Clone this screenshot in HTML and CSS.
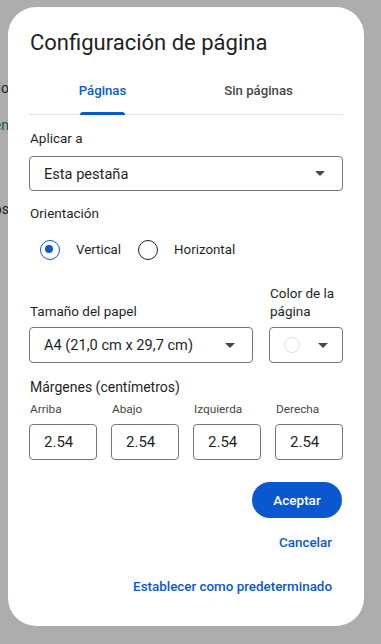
FILE: index.html
```html
<!DOCTYPE html>
<html lang="es">
<head>
    <meta charset="UTF-8">
    <meta name="viewport" content="width=device-width, initial-scale=1.0">
    <title>Configuración de página</title>
    <link rel="stylesheet" href="styles.css">
</head>
<body>
    <div class="doc-behind">
        <div class="doc-line doc-line-1"><span>Documento sin título</span></div>
        <div class="doc-line doc-line-2 doc-green"><span>Agregar pestaña y resumen</span></div>
        <div class="doc-line doc-line-3"><span>Los encabezados aparecerán aquí. Títulos</span></div>
    </div>

    <div class="dialog" role="dialog">
        <h1 class="dialog-title">Configuración de página</h1>

        <nav class="tabs">
            <a href="#" class="tab active"><span>Páginas</span></a>
            <a href="#" class="tab"><span>Sin páginas</span></a>
        </nav>

        <div class="field-label apply-label">Aplicar a</div>
        <div class="select">
            <span class="select-text">Esta pestaña</span>
            <span class="caret"></span>
        </div>

        <div class="field-label orient-label">Orientación</div>
        <div class="radio-row">
            <label class="radio">
                <span class="radio-dot checked"></span>
                <span class="radio-text">Vertical</span>
            </label>
            <label class="radio">
                <span class="radio-dot"></span>
                <span class="radio-text">Horizontal</span>
            </label>
        </div>

        <div class="paper-row">
            <div class="paper-col">
                <div class="field-label">Tamaño del papel</div>
                <div class="select">
                    <span class="select-text">A4 (21,0 cm x 29,7 cm)</span>
                    <span class="caret"></span>
                </div>
            </div>
            <div class="color-col">
                <div class="field-label">Color de la página</div>
                <div class="select color-select">
                    <span class="swatch"></span>
                    <span class="caret"></span>
                </div>
            </div>
        </div>

        <div class="field-label margins-label">Márgenes (centímetros)</div>
        <div class="margins">
            <div class="margin-field">
                <div class="margin-label">Arriba</div>
                <div class="margin-input">2.54</div>
            </div>
            <div class="margin-field">
                <div class="margin-label">Abajo</div>
                <div class="margin-input">2.54</div>
            </div>
            <div class="margin-field">
                <div class="margin-label">Izquierda</div>
                <div class="margin-input">2.54</div>
            </div>
            <div class="margin-field">
                <div class="margin-label">Derecha</div>
                <div class="margin-input">2.54</div>
            </div>
        </div>

        <div class="actions">
            <button class="btn-primary">Aceptar</button>
            <button class="btn-text cancel-btn">Cancelar</button>
            <button class="btn-text default-btn">Establecer como predeterminado</button>
        </div>
    </div>
</body>
</html>
```

FILE: styles.css
```css
:root {
    --blue: #0b57d0;
    --text: #1f1f1f;
    --muted: #444746;
    --outline: #747775;
    --scrim: #adadad;
}

* {
    margin: 0;
    padding: 0;
    box-sizing: border-box;
    font-family: Roboto, 'Noto Sans', sans-serif;
}

body {
    background: var(--scrim);
    color: var(--text);
    width: 381px;
    height: 644px;
    overflow: hidden;
    position: relative;
}

/* document text under the scrim, only its edge peeks out */
.doc-behind {
    width: 9px;
    padding-top: 78px;
}

.doc-line {
    display: flex;
    justify-content: flex-end;
    white-space: nowrap;
    font-size: 14px;
    line-height: 20px;
    color: #222;
}

.doc-line-2 {
    margin-top: 17px;
}

.doc-line-3 {
    margin-top: 64px;
}

.doc-green {
    color: #1e5a2c;
}

.dialog {
    position: absolute;
    top: 7px;
    left: 8px;
    width: 356px;
    height: 619px;
    background: #fff;
    border-radius: 28px;
    padding: 22px 21px 22px;
    display: flex;
    flex-direction: column;
}

.dialog-title {
    font-size: 22px;
    font-weight: 400;
    line-height: 28px;
    color: var(--text);
    padding-left: 1px;
}

.tabs {
    margin-top: 9px;
    display: flex;
    border-bottom: 1px solid #e3e3e3;
}

.tab {
    flex: 1;
    height: 48px;
    display: flex;
    justify-content: center;
    align-items: stretch;
    text-decoration: none;
    color: var(--muted);
    font-size: 13.2px;
    font-weight: 500;
}

.tab:first-child {
    margin-left: -5px;
    margin-right: 5px;
}

.tab:last-child {
    margin-left: -6px;
    margin-right: 6px;
}

.tab span {
    display: flex;
    align-items: center;
    position: relative;
}

.tab.active {
    color: var(--blue);
}

.tab.active span::after {
    content: '';
    position: absolute;
    left: 1px;
    right: 1px;
    bottom: -1px;
    height: 3px;
    background: var(--blue);
    border-radius: 3px 3px 0 0;
}

.field-label {
    font-size: 13.5px;
    line-height: 20px;
    color: var(--text);
    padding-left: 1px;
}

.apply-label {
    margin-top: 13px;
}

.select {
    margin-top: 8px;
    height: 36px;
    border: 1px solid var(--outline);
    border-radius: 4px;
    display: flex;
    align-items: center;
    padding: 0 17px 0 14px;
}

.select-text {
    flex: 1;
    font-size: 14.6px;
    color: var(--text);
}

.caret {
    width: 0;
    height: 0;
    border-left: 5px solid transparent;
    border-right: 5px solid transparent;
    border-top: 5px solid var(--muted);
}

.orient-label {
    margin-top: 12px;
}

.radio-row {
    margin-top: 8px;
    height: 36px;
    display: flex;
    align-items: center;
}

.radio {
    display: flex;
    align-items: center;
    font-size: 13.3px;
    color: var(--text);
}

.radio + .radio {
    margin-left: 6px;
}

.radio-dot {
    width: 40px;
    height: 36px;
    position: relative;
    margin-right: 7px;
}

.radio-dot::before {
    content: '';
    position: absolute;
    left: 11px;
    top: 9px;
    width: 18px;
    height: 18px;
    border: 1.6px solid var(--text);
    border-radius: 50%;
}

.radio-dot.checked::before {
    border-color: var(--blue);
}

.radio-dot.checked::after {
    content: '';
    position: absolute;
    left: 16px;
    top: 14px;
    width: 8px;
    height: 8px;
    background: var(--blue);
    border-radius: 50%;
}

.paper-row {
    margin-top: 17px;
    display: flex;
    gap: 16px;
    align-items: flex-end;
}

.paper-col {
    flex: 1;
}

.paper-col .field-label,
.color-col .field-label {
    line-height: 18px;
}

.color-col {
    width: 74px;
}

.paper-col .select,
.color-select {
    margin-top: 7px;
}

.color-select {
    padding: 0 14px 0 14px;
    justify-content: space-between;
}

.swatch {
    width: 16px;
    height: 16px;
    border: 1px solid #e0e0e0;
    border-radius: 50%;
}

.margins-label {
    margin-top: 14px;
    font-size: 14px;
}

.margins {
    margin-top: 3px;
    display: flex;
    gap: 14px;
}

.margin-field {
    flex: 1;
}

.margin-label {
    font-size: 11.8px;
    line-height: 18px;
    color: var(--muted);
    padding-left: 1px;
}

.margin-input {
    margin-top: 6px;
    height: 36px;
    border: 1px solid var(--outline);
    border-radius: 4px;
    font-size: 15px;
    line-height: 34px;
    padding-left: 14px;
    color: var(--text);
}

.actions {
    margin-top: 22px;
    display: flex;
    flex-direction: column;
    align-items: flex-end;
}

.btn-primary {
    width: 90px;
    height: 36px;
    margin-right: 1px;
    border: none;
    border-radius: 18px;
    background: var(--blue);
    color: #fff;
    font-size: 13.5px;
    font-weight: 500;
}

.btn-text {
    height: 36px;
    border: none;
    background: none;
    padding: 0 11px;
    color: var(--blue);
    font-size: 13.4px;
    font-weight: 500;
}

.cancel-btn {
    margin-top: 6px;
}

.default-btn {
    margin-top: 8px;
}
```
